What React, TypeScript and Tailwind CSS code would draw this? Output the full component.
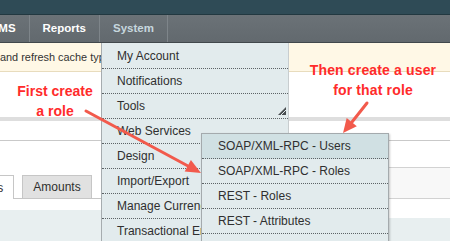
import React from "react";

const menuItems = [
  "My Account",
  "Notifications",
  "Tools",
  "Web Services",
  "Design",
  "Import/Export",
  "Manage Currency",
  "Transactional Emails",
];

const subItems = [
  "SOAP/XML-RPC - Users",
  "SOAP/XML-RPC - Roles",
  "REST - Roles",
  "REST - Attributes",
  "REST - OAuth Consumers",
];

const App: React.FC = () => {
  return (
    <div className="relative w-[450px] h-[241px] overflow-hidden bg-white font-['Liberation_Sans',Arial,sans-serif] text-[12px] text-[#2f2f2f]">
      {/* Top strip */}
      <div className="h-[15px] bg-[#2f4b56] border-b border-[#223840]" />

      {/* Nav bar */}
      <nav className="h-[28px] flex items-stretch bg-gradient-to-b from-[#6b7277] to-[#62696e] border-b border-[#41484c] text-white font-bold text-[11.5px]">
        <div className="flex items-center -ml-[10px] pr-[13px]">CMS</div>
        <div className="flex items-center px-[13px] border-l border-[#7e858a]">Reports</div>
        <div className="flex items-center px-[13px] border-x border-[#7e858a] text-[#c6d7de]">System</div>
      </nav>

      {/* Notice */}
      <div className="h-[29px] flex items-center bg-[#fff8e6] border-b border-[#e8dcbd] text-[#333] text-[10.9px]">
        <span className="w-[101px] overflow-hidden whitespace-nowrap">and refresh cache types.</span>
      </div>

      {/* Page content */}
      <div className="h-[45px]" />
      <div className="h-[4px] bg-[#dedede]" />
      <div className="h-[20px] border-b border-[#c9c9c9]" />

      <div className="flex h-[100px]">
        {/* Left: tabs */}
        <div className="w-[200px] flex flex-col">
          <div className="h-[34px]" />
          <div className="h-[24px] flex items-stretch border-b border-[#c6c6c6]">
            <div className="-ml-[37px] -mb-px px-[10px] bg-white border-x border-t border-[#c6c6c6] flex items-center">
              Items
            </div>
            <div className="ml-[8px] px-[10px] bg-[#e1e1e1] border-x border-t border-[#c6c6c6] flex items-center">
              Amounts
            </div>
          </div>
          <div className="h-[11px]" />
          <div className="flex-1 bg-[#e8eff0]" />
        </div>

        {/* Right: grid */}
        <div className="flex-1 flex flex-col">
          <div className="h-[27px] border-b border-[#d2d2d2]" />
          <div className="h-[31px] bg-[#f8f8f8] border-b border-[#d2d2d2]" />
          <div className="h-[19px]" />
          <div className="flex-1 bg-[#e8eff0]" />
        </div>
      </div>

      {/* System dropdown */}
      <div className="absolute left-[101px] top-[43px] bottom-0 w-[188px] pt-[1px] bg-[#e2ebed] border-l border-[#a6acaf] border-r border-r-[#c8cdcf]">
        {menuItems.map((item) => (
          <div
            key={item}
            className="relative h-[25px] pl-[15px] flex items-center border-b border-dotted border-[#5d6366] whitespace-nowrap"
          >
            {item}
            {item === "Tools" && (
              <svg className="absolute right-[2px] bottom-[3px]" width="8" height="8" viewBox="0 0 8 8">
                <polygon points="8,0 8,8 0,8" fill="#4a4f52" />
                <line x1="8" y1="3" x2="3" y2="8" stroke="#e2ebed" strokeWidth="1" />
              </svg>
            )}
          </div>
        ))}
      </div>

      {/* Web Services submenu */}
      <div className="absolute left-[201px] top-[133px] w-[188px] -bottom-[20px] bg-[#e2ebed] border border-[#a4aaad] shadow-[1px_1px_2px_rgba(0,0,0,0.2)]">
        {subItems.map((item, i) => (
          <div
            key={item}
            className={`h-[25px] pl-[16px] flex items-center border-b border-dotted border-[#5d6366] whitespace-nowrap ${
              i === 0 ? "bg-[#d0e0e3]" : ""
            }`}
          >
            {item}
          </div>
        ))}
      </div>

      {/* Annotations */}
      <div className="absolute left-[5px] top-[81px] w-[100px] text-center text-[14px] leading-[20px] font-bold text-[#ff2b2b]">
        First create
        <br />
        a role
      </div>
      <div className="absolute left-[303px] top-[60px] w-[140px] text-center text-[14px] leading-[20px] font-bold text-[#ff2b2b] tracking-[0.15px]">
        Then create a user
        <br />
        for that role
      </div>

      <svg className="absolute inset-0 pointer-events-none" width="450" height="241" viewBox="0 0 450 241">
        <line x1="86" y1="111" x2="188" y2="166" stroke="#f25a4c" strokeWidth="3" strokeLinecap="round" />
        <polygon points="201,173 184.7,171.5 190.9,160.1" fill="#f25a4c" />
        <line x1="367" y1="103" x2="352" y2="122" stroke="#f25a4c" strokeWidth="3" strokeLinecap="round" />
        <polygon points="343,133 346.7,118 356.8,126.2" fill="#f25a4c" />
      </svg>
    </div>
  );
};

export default App;
